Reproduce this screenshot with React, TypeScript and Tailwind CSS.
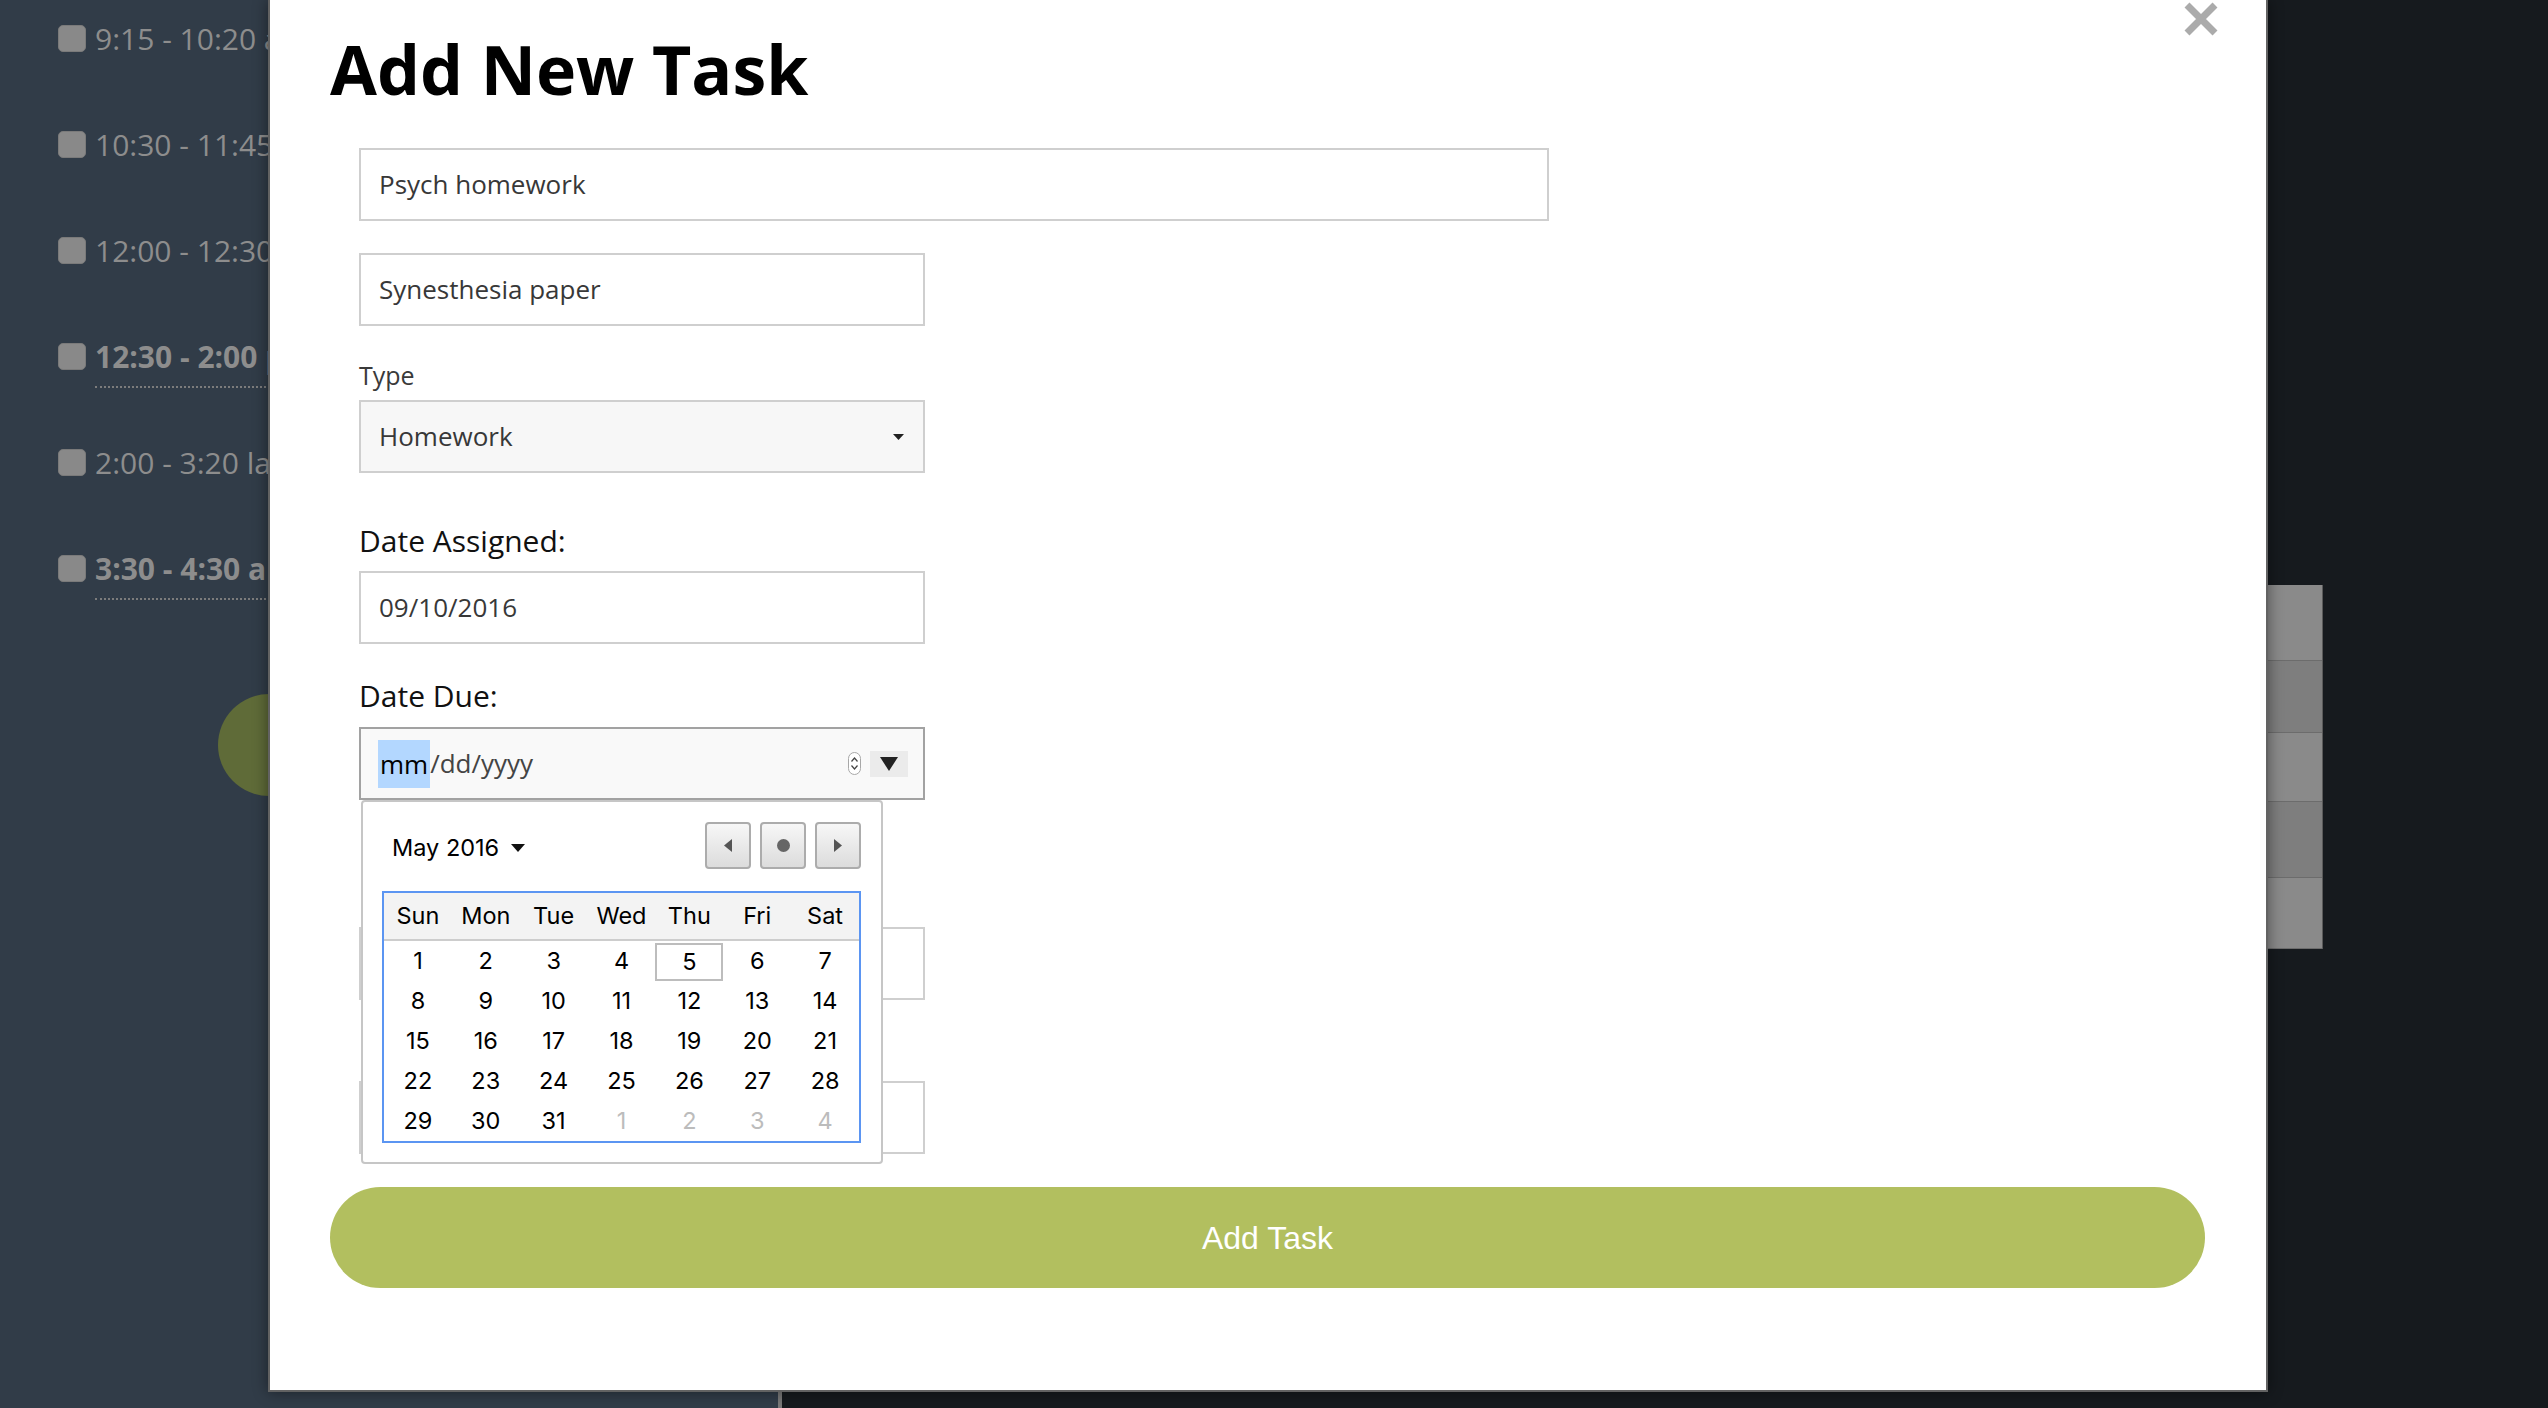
import React from 'react';

const scheduleItems = [
  { time: '9:15 - 10:20 am', bold: false },
  { time: '10:30 - 11:45 am', bold: false },
  { time: '12:00 - 12:30 pm', bold: false },
  { time: '12:30 - 2:00 pm', bold: true },
  { time: '2:00 - 3:20 lab', bold: false },
  { time: '3:30 - 4:30 am', bold: true },
];

const blockSegments = [
  { h: 'h-[76px]', bg: 'bg-[#8a8a8a]' },
  { h: 'h-[72px]', bg: 'bg-[#7e7e7e]' },
  { h: 'h-[69px]', bg: 'bg-[#8a8a8a]' },
  { h: 'h-[76px]', bg: 'bg-[#7e7e7e]' },
  { h: 'h-[71px]', bg: 'bg-[#8a8a8a]' },
];

const weekDays = ['Sun', 'Mon', 'Tue', 'Wed', 'Thu', 'Fri', 'Sat'];

// May 2016, plus the trailing days of June
const calendarWeeks: { day: number; muted?: boolean; today?: boolean }[][] = [
  [{ day: 1 }, { day: 2 }, { day: 3 }, { day: 4 }, { day: 5, today: true }, { day: 6 }, { day: 7 }],
  [{ day: 8 }, { day: 9 }, { day: 10 }, { day: 11 }, { day: 12 }, { day: 13 }, { day: 14 }],
  [{ day: 15 }, { day: 16 }, { day: 17 }, { day: 18 }, { day: 19 }, { day: 20 }, { day: 21 }],
  [{ day: 22 }, { day: 23 }, { day: 24 }, { day: 25 }, { day: 26 }, { day: 27 }, { day: 28 }],
  [
    { day: 29 },
    { day: 30 },
    { day: 31 },
    { day: 1, muted: true },
    { day: 2, muted: true },
    { day: 3, muted: true },
    { day: 4, muted: true },
  ],
];

const NavButton = ({ children }: { children: React.ReactNode }) => (
  <div className="w-[46px] h-[47px] rounded-[4px] border-2 border-[#acacac] bg-linear-to-b from-[#f7f7f7] to-[#dcdcdc] flex items-center justify-center">
    {children}
  </div>
);

const DatePickerPopup = () => (
  <div className="absolute left-[2px] top-[73px] w-[522px] h-[364px] bg-white border-2 border-[#c6c6c6] rounded-[4px] pt-[20px] pl-[19px] pr-[20px] font-['Inter',sans-serif] text-black z-10">
    <div className="flex items-center justify-between h-[47px]">
      <div className="flex items-center pl-[10px] mt-[4px] text-[23.5px]">
        <span>May 2016</span>
        <svg width="14" height="8" viewBox="0 0 14 8" className="ml-[12px]">
          <path d="M0 0 L14 0 L7 8 Z" fill="#111" />
        </svg>
      </div>
      <div className="flex gap-[9px]">
        <NavButton>
          <svg width="8" height="13" viewBox="0 0 8 13">
            <path d="M8 0 L0 6.5 L8 13 Z" fill="#555" />
          </svg>
        </NavButton>
        <NavButton>
          <div className="w-[13px] h-[13px] rounded-full bg-[#666]" />
        </NavButton>
        <NavButton>
          <svg width="8" height="13" viewBox="0 0 8 13">
            <path d="M0 0 L8 6.5 L0 13 Z" fill="#555" />
          </svg>
        </NavButton>
      </div>
    </div>

    <div className="mt-[22px] w-[479px] border-2 border-[#5b95f2]">
      <div className="grid grid-cols-7 h-[48px] bg-[#f3f3f3] border-b-2 border-[#cdcdcd] text-[23.5px]">
        {weekDays.map((d) => (
          <div key={d} className="flex items-center justify-center">
            {d}
          </div>
        ))}
      </div>
      {calendarWeeks.map((week, i) => (
        <div key={i} className="grid grid-cols-7 h-[40px] text-[23.5px]">
          {week.map((cell, j) => (
            <div key={j} className="flex items-center justify-center">
              {cell.today ? (
                <div className="w-full h-[38px] mt-[2px] border-2 border-[#bdbdbd] flex items-center justify-center">
                  {cell.day}
                </div>
              ) : (
                <span className={cell.muted ? 'text-[#bcbcbc]' : ''}>{cell.day}</span>
              )}
            </div>
          ))}
        </div>
      ))}
    </div>
  </div>
);

const TextBox = ({ value, wide }: { value?: string; wide?: boolean }) => (
  <div
    className={`${wide ? 'w-[1190px]' : 'w-[566px]'} h-[73px] border-2 border-[#cfcfcf] bg-white flex items-center pl-[18px] text-[26px] text-[#383838]`}
  >
    {value}
  </div>
);

const App = () => {
  return (
    <div className="relative w-[2548px] h-[1408px] overflow-hidden flex bg-[#161a1e] font-['Open_Sans',sans-serif]">
      {/* Sidebar schedule (behind overlay) */}
      <div className="w-[778px] bg-[#313c48] pt-[18px] pl-[58px]">
        {scheduleItems.map((item) => (
          <div key={item.time} className="h-[106px]">
            <div className="flex items-center h-[40px] gap-[9px]">
              <div className="w-[28px] h-[27px] rounded-[5px] bg-[#898989] border border-[#7a7a7a] shrink-0" />
              <span
                className={`text-[30px] whitespace-nowrap text-[#8d8d8d] ${item.bold ? 'font-bold' : 'font-normal'}`}
              >
                {item.time}
              </span>
            </div>
            {item.bold && <div className="ml-[37px] mt-[10px] border-b-2 border-dotted border-[#7c7c7c]" />}
          </div>
        ))}
        <div className="mt-[40px] ml-[160px] w-[102px] h-[102px] rounded-full bg-[#5f6b38]" />
      </div>
      <div className="w-[4px] bg-[#787878]" />

      {/* Main area (behind overlay) */}
      <div className="flex-1 flex justify-end pt-[585px] pr-[225px]">
        <div className="w-[300px] h-fit border-r border-[#5a5a5a]">
          {blockSegments.map((s, i) => (
            <div key={i} className={`${s.h} ${s.bg} border-b border-[#6c6c6c]`} />
          ))}
        </div>
      </div>

      {/* Add task modal */}
      <div className="absolute left-[268px] top-0 w-[2000px] h-[1392px] bg-white border-x-2 border-b-2 border-[#626262] shadow-[0_0_14px_rgba(0,0,0,0.45)] pl-[60px] pr-[61px]">
        <svg width="36" height="34" viewBox="0 0 36 34" className="absolute right-[47px] top-[2px]">
          <path d="M4 3 L32 31 M32 3 L4 31" stroke="#ababab" strokeWidth="7" />
        </svg>

        <h1 className="mt-[34px] text-[68px] leading-[70px] font-bold text-black">Add New Task</h1>

        <div className="ml-[29px] mt-[44px] flex flex-col">
          <TextBox value="Psych homework" wide />
          <div className="mt-[32px]">
            <TextBox value="Synesthesia paper" />
          </div>

          <label className="mt-[32px] text-[25px] leading-[34px] text-[#3a3a3a]">Type</label>
          <div className="mt-[8px] w-[566px] h-[73px] border-2 border-[#cfcfcf] bg-[#f7f7f7] flex items-center pl-[18px] pr-[19px] text-[26px] text-[#383838]">
            <span>Homework</span>
            <svg width="11" height="6" viewBox="0 0 11 6" className="ml-auto">
              <path d="M0 0 L11 0 L5.5 6 Z" fill="#222" />
            </svg>
          </div>

          <label className="mt-[48px] text-[30px] leading-[40px] text-[#111]">Date Assigned:</label>
          <div className="mt-[10px]">
            <TextBox value="09/10/2016" />
          </div>

          <label className="mt-[32px] text-[30px] leading-[40px] text-[#111]">Date Due:</label>
          <div className="relative mt-[11px] w-[566px]">
            <div className="h-[73px] border-2 border-[#a2a2a2] bg-[#f9f9f9] flex items-center pl-[17px] pr-[15px] text-[26px]">
              <span className="bg-[#b3d7ff] text-black px-[2px] h-[48px] leading-[48px]">mm</span>
              <span className="text-[#444]">/dd/yyyy</span>
              <div className="ml-auto flex items-center gap-[9px]">
                <div className="w-[13px] h-[23px] rounded-full border border-[#a8a8a8] bg-white flex flex-col items-center justify-center gap-[3px]">
                  <svg width="7" height="5" viewBox="0 0 7 5">
                    <path d="M0.5 4.5 L3.5 1 L6.5 4.5" stroke="#444" strokeWidth="1.2" fill="none" />
                  </svg>
                  <svg width="7" height="5" viewBox="0 0 7 5">
                    <path d="M0.5 0.5 L3.5 4 L6.5 0.5" stroke="#444" strokeWidth="1.2" fill="none" />
                  </svg>
                </div>
                <div className="w-[38px] h-[26px] bg-[#ebebeb] flex items-center justify-center">
                  <svg width="18" height="14" viewBox="0 0 18 14">
                    <path d="M0 0 L18 0 L9 14 Z" fill="#222" />
                  </svg>
                </div>
              </div>
            </div>
            <DatePickerPopup />
          </div>

          <div className="mt-[127px]">
            <TextBox />
          </div>
          <div className="mt-[81px]">
            <TextBox />
          </div>
        </div>

        <button className="mt-[33px] w-full h-[101px] rounded-full bg-[#b2bf5f] text-white text-[32px] font-['Liberation_Sans',sans-serif]">
          Add Task
        </button>
      </div>
    </div>
  );
};

export default App;
